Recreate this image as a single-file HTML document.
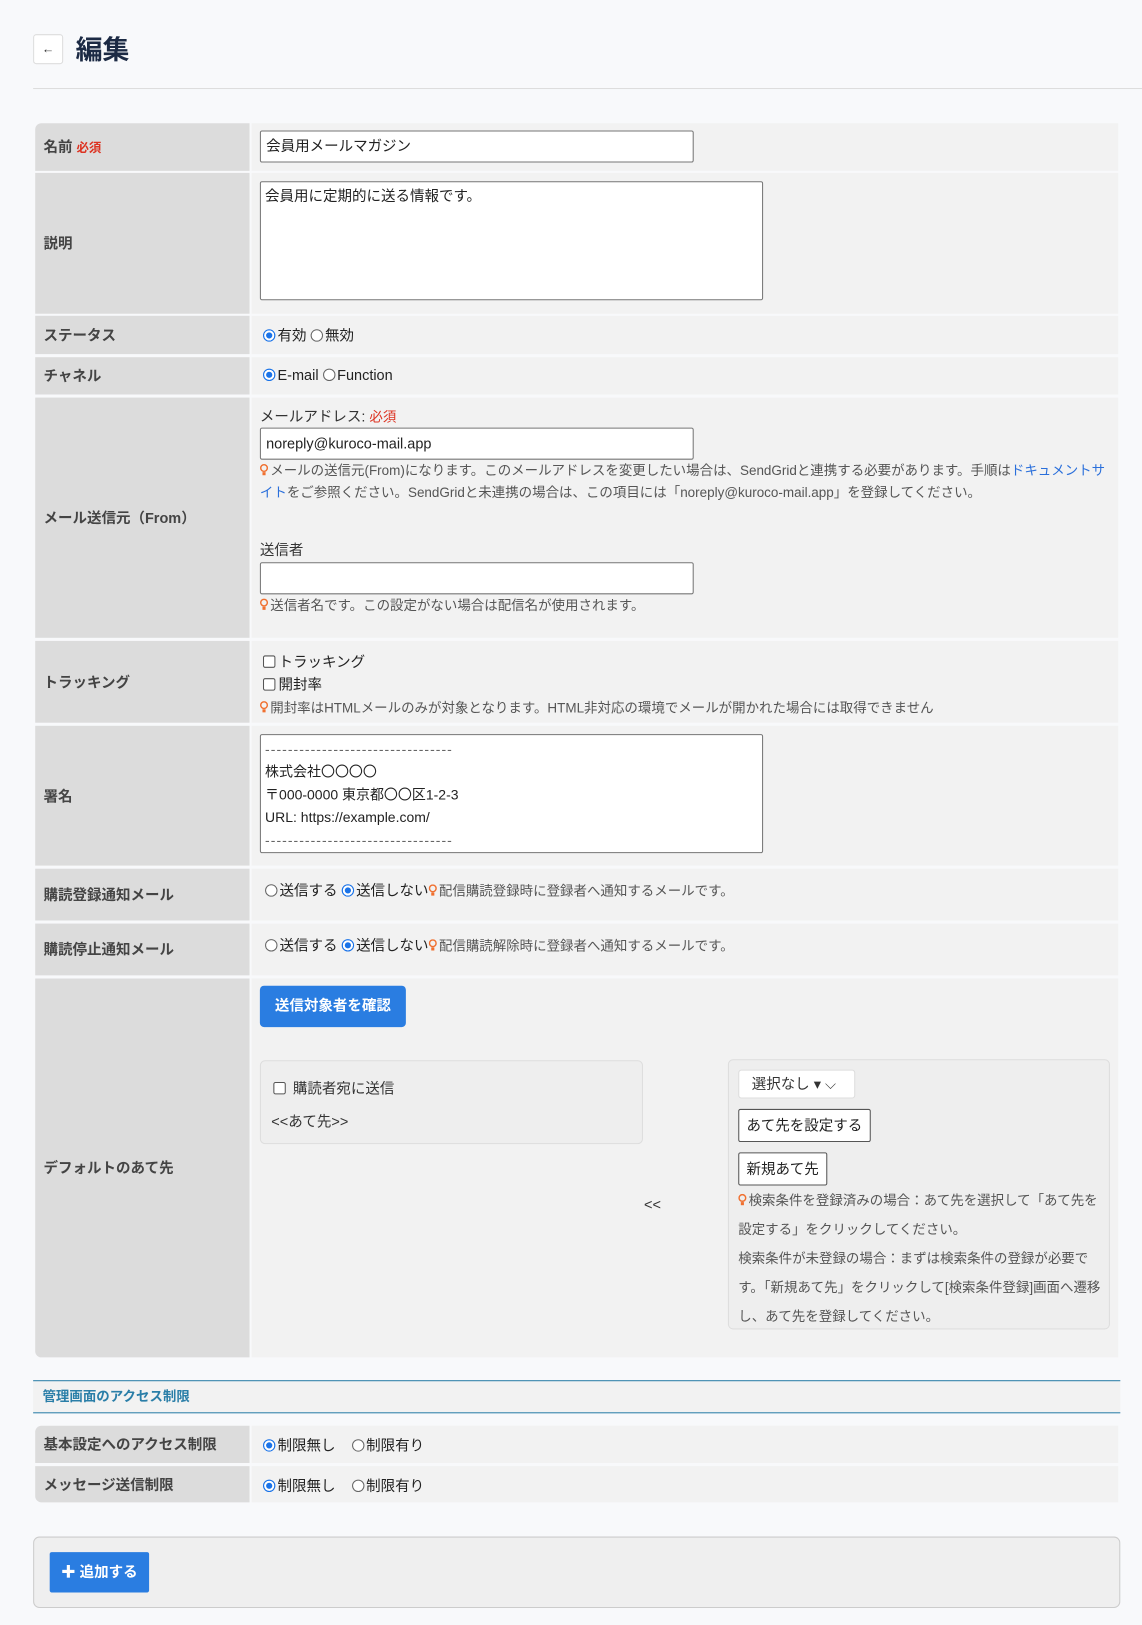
<!DOCTYPE html>
<html><head><meta charset="utf-8"><style>
*{box-sizing:border-box;margin:0;padding:0}
html,body{width:1142px;height:1624px;overflow:hidden;background:#f8f9fb}
#w{position:absolute;left:0;top:0;width:1103px;height:1569px;transform:scale(1.0354);transform-origin:0 0;font-family:"Liberation Sans","Noto Sans CJK JP",sans-serif;color:#222;font-size:14px}
.a{position:absolute}
.lab{position:absolute;left:34px;width:207px;background:#dcdcdc;font-weight:bold;color:#444;font-size:14px;padding-left:8px;display:flex;align-items:center}
.val{position:absolute;left:243px;width:837px;background:#f2f2f2}
.inp{position:absolute;background:#fff;border:1px solid #767676;border-radius:2px;font-size:14px;padding:0 5px}
.hint{font-size:13px;color:#555}
.r{display:inline-block;width:12px;height:12px;border:1px solid #666;border-radius:50%;vertical-align:-1px;background:#fff;margin-right:2px}
.r.on{border:1px solid #1a73e8;box-shadow:inset 0 0 0 2px #fff;background:#1a73e8}
.c{display:inline-block;width:12px;height:12px;border:1px solid #555;border-radius:2px;vertical-align:-1px;background:#fff;margin-right:3px}
.bulb{display:inline-block;width:8px;height:12px;vertical-align:-1px;margin-right:2px}
.req{color:#d32;font-size:12px}
.btn{position:absolute;background:#fff;border:1px solid #555;border-radius:2px;font-size:14px;padding:0 7px;line-height:30px}
</style></head><body>
<svg width="0" height="0" style="position:absolute"><defs><symbol id="b" viewBox="0 0 8 12"><circle cx="4" cy="4" r="3.2" fill="none" stroke="#f07030" stroke-width="1.4"/><rect x="2.5" y="8" width="3" height="3" fill="#f07030"/></symbol></defs></svg>
<div id="w">
<div class="a" style="left:32px;top:33px;width:29px;height:29px;border:1px solid #ddd;border-radius:3px;background:#fff;text-align:center;line-height:26px;font-size:12px;color:#333">←</div>
<div class="a" style="left:73px;top:28px;font-size:26px;font-weight:bold;color:#1c2a44">編集</div>
<div class="a" style="left:32px;top:85px;width:1071px;height:1px;background:#ddd"></div>

<div class="lab" style="top:119px;height:46px;border-top-left-radius:6px">名前&nbsp;<span class="req">必須</span></div>
<div class="val" style="top:119px;height:46px"></div>
<div class="inp" style="left:251px;top:126px;width:419px;height:31px;line-height:29px">会員用メールマガジン</div>

<div class="lab" style="top:167px;height:136px">説明</div>
<div class="val" style="top:167px;height:136px"></div>
<div class="inp" style="left:251px;top:175px;width:486px;height:115px;padding:3px 4px">会員用に定期的に送る情報です。</div>

<div class="lab" style="top:305px;height:37px">ステータス</div>
<div class="val" style="top:305px;height:37px"></div>
<div class="a" style="left:254px;top:314px"><span class="r on"></span>有効 <span class="r"></span>無効</div>

<div class="lab" style="top:345px;height:36px">チャネル</div>
<div class="val" style="top:345px;height:36px"></div>
<div class="a" style="left:254px;top:354px"><span class="r on"></span>E-mail <span class="r"></span>Function</div>

<div class="lab" style="top:384px;height:232px">メール送信元（From）</div>
<div class="val" style="top:384px;height:232px"></div>
<div class="a" style="left:251px;top:392px;font-size:14px;color:#333">メールアドレス: <span class="req" style="font-size:13px">必須</span></div>
<div class="inp" style="left:251px;top:413px;width:419px;height:31px;line-height:29px">noreply@kuroco-mail.app</div>
<div class="a hint" style="left:251px;top:444px;width:825px;line-height:21px"><svg class="bulb"><use href="#b"/></svg>メールの送信元(From)になります。このメールアドレスを変更したい場合は、SendGridと連携する必要があります。手順は<span style="color:#2a6fdb">ドキュメントサイト</span>をご参照ください。SendGridと未連携の場合は、この項目には「noreply@kuroco-mail.app」を登録してください。</div>
<div class="a" style="left:251px;top:521px;font-size:14px;color:#333">送信者</div>
<div class="inp" style="left:251px;top:543px;width:419px;height:31px"></div>
<div class="a hint" style="left:251px;top:574px"><svg class="bulb"><use href="#b"/></svg>送信者名です。この設定がない場合は配信名が使用されます。</div>

<div class="lab" style="top:619px;height:79px">トラッキング</div>
<div class="val" style="top:619px;height:79px"></div>
<div class="a" style="left:254px;top:628px;line-height:22px"><span class="c"></span>トラッキング<br><span class="c"></span>開封率</div>
<div class="a hint" style="left:251px;top:673px"><svg class="bulb"><use href="#b"/></svg>開封率はHTMLメールのみが対象となります。HTML非対応の環境でメールが開かれた場合には取得できません</div>

<div class="lab" style="top:701px;height:135px">署名</div>
<div class="val" style="top:701px;height:135px"></div>
<div class="inp" style="left:251px;top:709px;width:486px;height:115px;padding:3px 4px;line-height:22px;font-size:13.5px"><span style="color:#666;letter-spacing:1px">---------------------------------</span><br>株式会社〇〇〇〇<br>〒000-0000 東京都〇〇区1-2-3<br>URL: https://example.com/<br><span style="color:#666;letter-spacing:1px">---------------------------------</span></div>

<div class="lab" style="top:839px;height:50px">購読登録通知メール</div>
<div class="val" style="top:839px;height:50px"></div>
<div class="a" style="left:256px;top:850px"><span class="r"></span>送信する <span class="r on"></span>送信しない<span class="hint"><svg class="bulb"><use href="#b"/></svg>配信購読登録時に登録者へ通知するメールです。</span></div>

<div class="lab" style="top:892px;height:50px">購読停止通知メール</div>
<div class="val" style="top:892px;height:50px"></div>
<div class="a" style="left:256px;top:903px"><span class="r"></span>送信する <span class="r on"></span>送信しない<span class="hint"><svg class="bulb"><use href="#b"/></svg>配信購読解除時に登録者へ通知するメールです。</span></div>

<div class="lab" style="top:945px;height:366px;border-bottom-left-radius:6px">デフォルトのあて先</div>
<div class="val" style="top:945px;height:366px"></div>
<div class="a" style="left:251px;top:952px;width:141px;height:40px;background:#2a7de1;border-radius:4px;color:#fff;font-weight:bold;text-align:center;line-height:39px">送信対象者を確認</div>
<div class="a" style="left:251px;top:1024px;width:370px;height:81px;border:1px solid #ddd;border-radius:5px;background:#eeeeee"></div>
<div class="a" style="left:264px;top:1041px;color:#333"><span class="c"></span>&nbsp;購読者宛に送信</div>
<div class="a" style="left:262px;top:1073px;color:#333">&lt;&lt;あて先&gt;&gt;</div>
<div class="a" style="left:622px;top:1155px;color:#333">&lt;&lt;</div>
<div class="a" style="left:703px;top:1023px;width:369px;height:261px;border:1px solid #ddd;border-radius:5px;background:#eeeeee"></div>
<div class="a" style="left:713px;top:1033px;width:113px;height:28px;background:#fff;border:1px solid #ddd;border-radius:3px;line-height:26px;padding-left:12px;color:#333">選択なし ▾ ⌵</div>
<div class="btn" style="left:713px;top:1071px">あて先を設定する</div>
<div class="btn" style="left:713px;top:1113px">新規あて先</div>
<div class="a hint" style="left:713px;top:1146px;width:352px;line-height:28px"><svg class="bulb"><use href="#b"/></svg>検索条件を登録済みの場合：あて先を選択して「あて先を設定する」をクリックしてください。<br>検索条件が未登録の場合：まずは検索条件の登録が必要です。「新規あて先」をクリックして[検索条件登録]画面へ遷移し、あて先を登録してください。</div>

<div class="a" style="left:32px;top:1333px;width:1050px;height:32px;border-top:1px solid #2a7ea8;border-bottom:1px solid #2a7ea8;background:#f2f2f2;color:#2a7ea8;font-weight:bold;font-size:13px;padding-left:9px;line-height:30px">管理画面のアクセス制限</div>

<div class="lab" style="top:1377px;height:36px;border-top-left-radius:6px">基本設定へのアクセス制限</div>
<div class="val" style="top:1377px;height:36px"></div>
<div class="a" style="left:254px;top:1386px"><span class="r on"></span>制限無し &nbsp;&nbsp;&nbsp;<span class="r"></span>制限有り</div>
<div class="lab" style="top:1416px;height:35px;border-bottom-left-radius:6px">メッセージ送信制限</div>
<div class="val" style="top:1416px;height:35px"></div>
<div class="a" style="left:254px;top:1425px"><span class="r on"></span>制限無し &nbsp;&nbsp;&nbsp;<span class="r"></span>制限有り</div>

<div class="a" style="left:32px;top:1484px;width:1050px;height:69px;border:1px solid #ccc;border-radius:6px;background:#efefef"></div>
<div class="a" style="left:48px;top:1499px;width:96px;height:39px;background:#2a7de1;border-radius:2px;color:#fff;font-weight:bold;text-align:center;line-height:38px">✚ 追加する</div>
</div>
</body></html>
